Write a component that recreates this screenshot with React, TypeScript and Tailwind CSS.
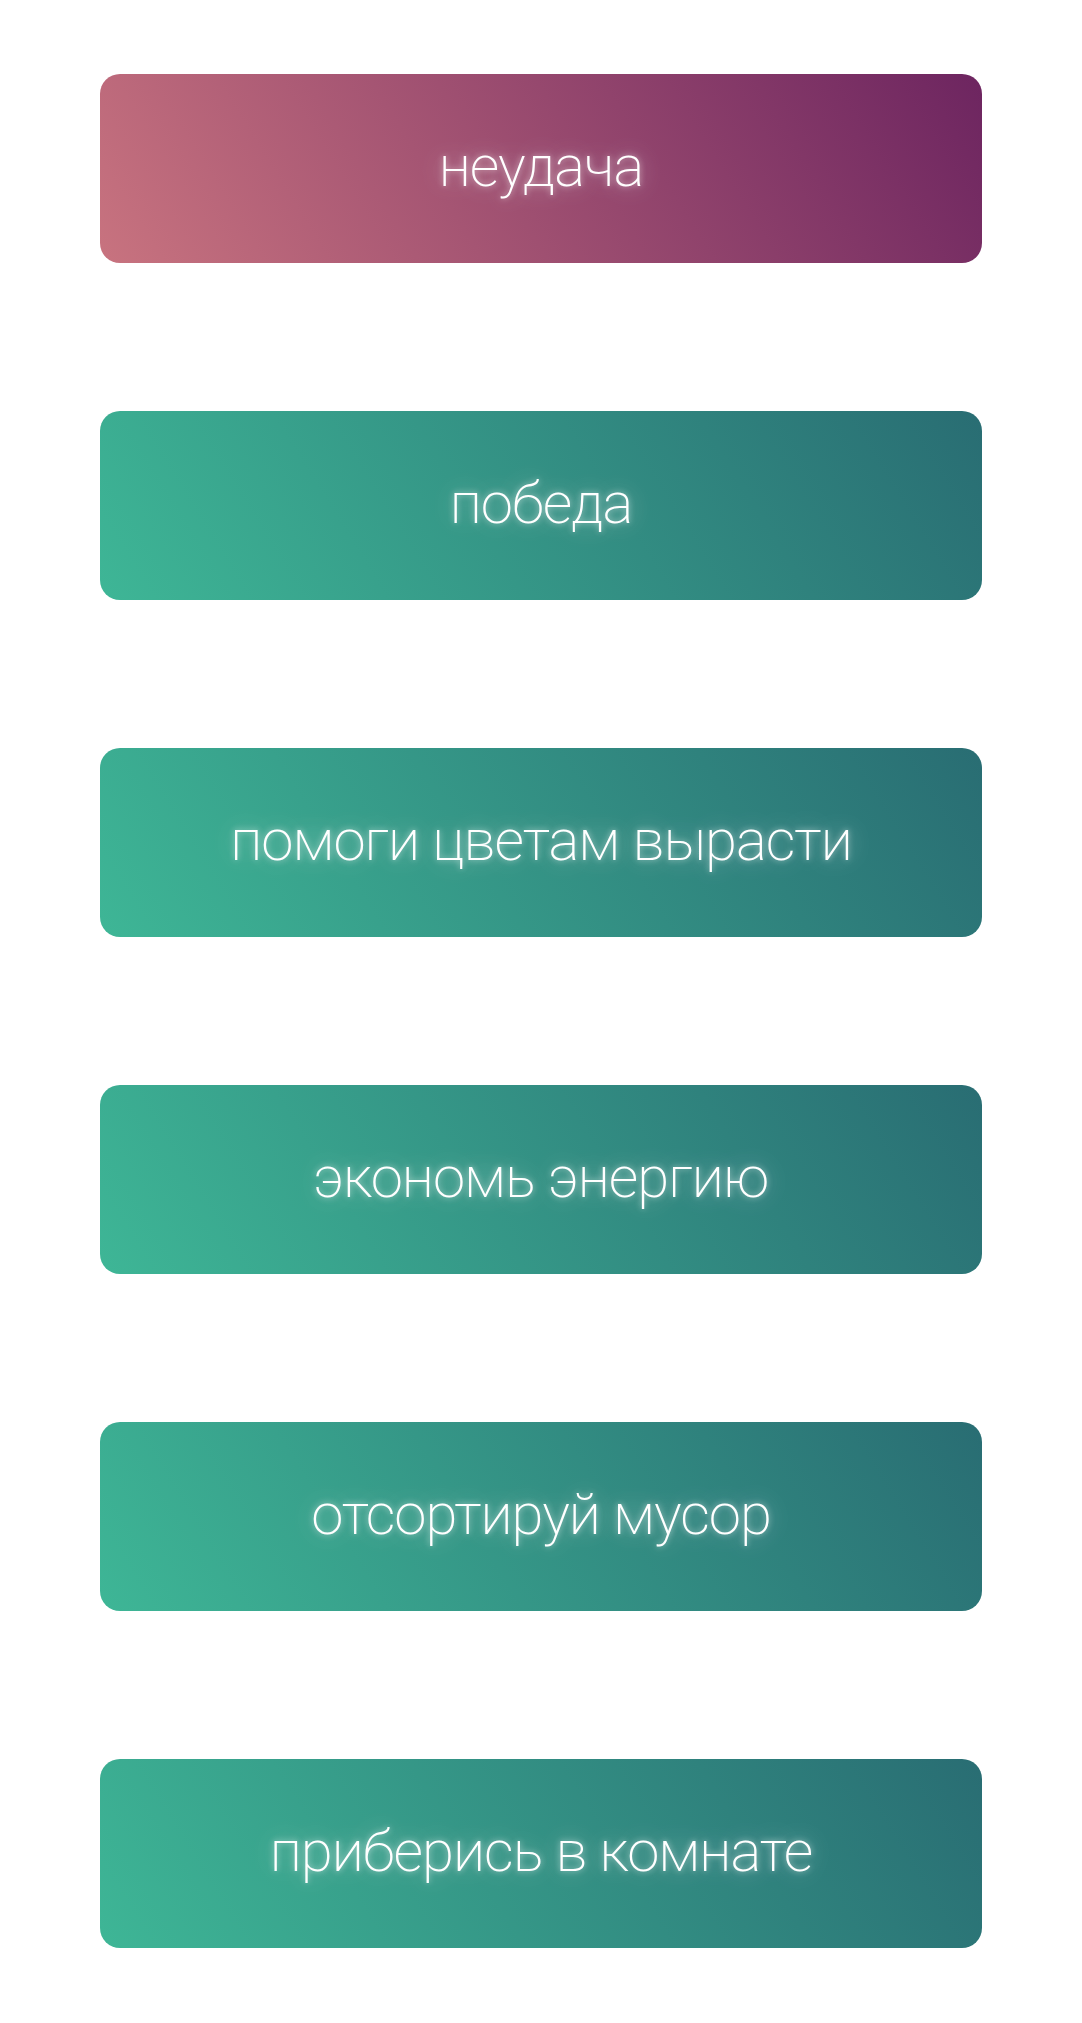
import React from 'react';

const tasks = [
  { label: 'неудача', fail: true },
  { label: 'победа' },
  { label: 'помоги цветам вырасти' },
  { label: 'экономь энергию' },
  { label: 'отсортируй мусор' },
  { label: 'приберись в комнате' },
];

const TaskCard = ({ label, fail }: { label: string; fail?: boolean }) => (
  <div
    className={
      'h-[189px] w-full rounded-[20px] flex items-center justify-center ' +
      (fail
        ? 'bg-linear-[58deg] from-[#c8737f] to-[#6d2560]'
        : 'bg-linear-[58deg] from-[#3eb696] to-[#296d73]')
    }
  >
    <span className="font-['Roboto','Noto_Sans',sans-serif] font-extralight text-[58px] tracking-[-1px] leading-none text-white pb-[6px] [text-shadow:0_0_6px_rgba(255,255,255,0.6),0_0_24px_rgba(255,255,255,0.45),0_0_40px_rgba(255,255,255,0.2)]">
      {label}
    </span>
  </div>
);

export default function App() {
  return (
    <div className="min-h-[2023px] bg-white px-[100px] pt-[74px] flex flex-col gap-[148px]">
      {tasks.map((t) => (
        <TaskCard key={t.label} label={t.label} fail={t.fail} />
      ))}
    </div>
  );
}
